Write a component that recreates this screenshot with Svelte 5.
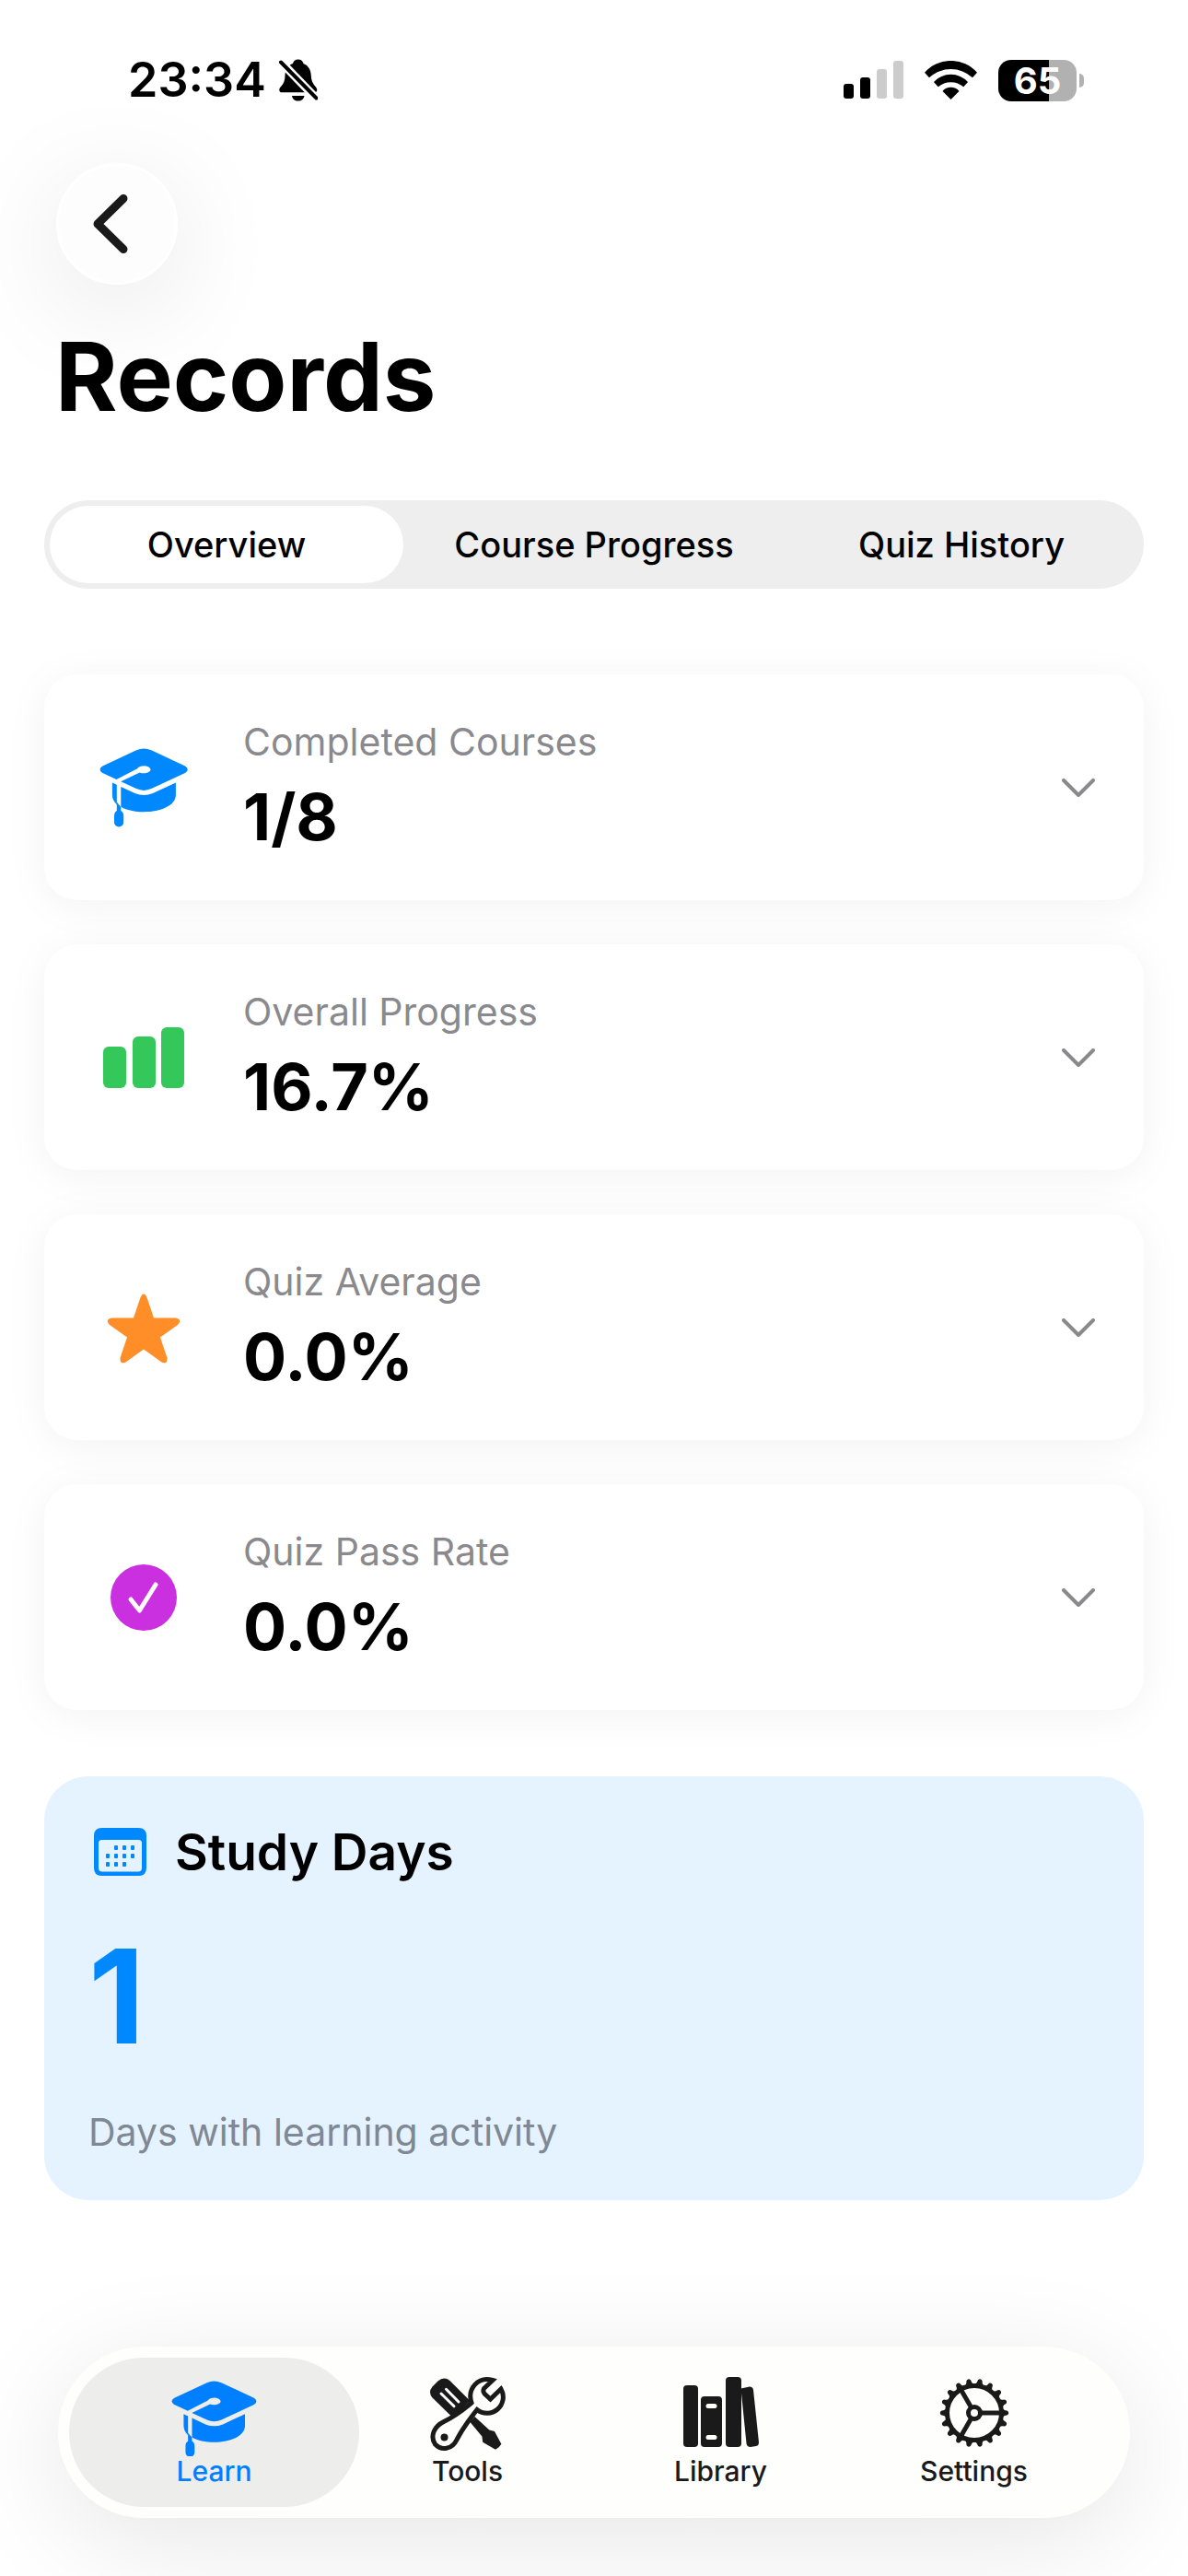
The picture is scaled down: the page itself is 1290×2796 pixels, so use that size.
<!--
  Records screen: study statistics overview with bottom tab bar
-->
<script lang="ts">
	type IconName = 'cap' | 'capSmall' | 'bars' | 'star' | 'check' | 'tools' | 'library' | 'gear';

	interface Stat {
		label: string;
		value: string;
		icon: IconName;
		tone: string;
	}

	const segments = ['Overview', 'Course Progress', 'Quiz History'];

	const stats: Stat[] = [
		{ label: 'Completed Courses', value: '1/8', icon: 'cap', tone: 'blue' },
		{ label: 'Overall Progress', value: '16.7%', icon: 'bars', tone: 'green' },
		{ label: 'Quiz Average', value: '0.0%', icon: 'star', tone: 'orange' },
		{ label: 'Quiz Pass Rate', value: '0.0%', icon: 'check', tone: 'purple' }
	];

	const tabs: { label: string; icon: IconName }[] = [
		{ label: 'Learn', icon: 'capSmall' },
		{ label: 'Tools', icon: 'tools' },
		{ label: 'Library', icon: 'library' },
		{ label: 'Settings', icon: 'gear' }
	];

	const teeth = Array.from({ length: 18 }, (_, i) => i * 20);
	const calendarDots = [
		[24, 21], [33, 21], [42, 21],
		[15, 30], [24, 30], [33, 30], [42, 30],
		[15, 39], [24, 39], [33, 39]
	];

	let segment = $state('Overview');
	let tab = $state('Learn');
</script>

{#snippet icon(name: IconName)}
	<svg class="icon" viewBox="0 0 96 88" fill="currentColor" aria-hidden="true">
		{#if name === 'cap' || name === 'capSmall'}
			<g transform={name === 'cap' ? 'translate(0.5 1.5)' : 'translate(1.500 6.5) scale(0.965)'}>
				<path d="M39.6 1.7Q47.7-1.8 55.8 1.7L92.5 19Q98 22.7 92.5 26.5L55.8 43.6Q47.7 47.2 39.6 43.6L22.7 35.7L43.2 25.9A7.3 4 0 1 0 40.6 21.8L18 33.5L2.9 26.5Q-2.8 22.7 2.9 19Z" />
				<path d="M13.4 37L18.3 39.3V61C15 57.5 13.4 54 13.4 50Z" />
				<path d="M22.8 41.4L38 48.6Q47.7 52.5 57.5 48.6L82.4 37V50C82.4 62 66 68.7 47.7 68.7C38 68.7 29 66.8 22.8 63.2Z" />
				<path d="M18.3 58L22.8 63.5V67.5Q25.7 69 25.7 73V80A5.1 5.1 0 0 1 15.5 80V73Q15.5 69 18.3 67.5Z" />
			</g>
		{:else if name === 'bars'}
			<rect x="4" y="32" width="25" height="45" rx="6" />
			<rect x="36" y="21" width="25" height="56" rx="6" />
			<rect x="67" y="11" width="25" height="66" rx="6" />
		{:else if name === 'star'}
			<path d="M44.4 11.5Q48 3.5 51.6 11.5L59 33.5H82.5Q90.500 35 85 41L66 54.5L73.5 77Q74 84.5 67.5 81.5L48 67.5L28.5 81.5Q22 84.5 22.5 77L30 54.5L11 41Q5.5 35 13.5 33.5H37Z" />
		{:else if name === 'check'}
			<circle cx="48" cy="44" r="36" />
			<path class="mark" d="M34 46L43.5 58L61 30" />
		{:else if name === 'tools'}
			<g transform="translate(7 2)">
				<path d="M2.5 22.5Q-2.5 16.5 2.5 10.5L8.5 4.5Q15-1 21.5 4L43.5 26Q34 36 23.5 43Z" />
				<path d="M43.3 48.8L48.5 43L64.3 57.5L70 59L77.4 72.7Q75 77 71 78.7L57.2 70.7L56.4 64.5Z" />
				<path class="slit" d="M12 18L26 31.7M17.5 13.3L31 27" />
				<path class="outline" d="M68 3.5L58.5 12.5Q57 15.500 59 18L65.5 24L77 13A17.500 17.500 0 0 1 51 35.500C43 46 37 53 29 68C24 79 12 80 5.5 73C-1 63 6 53 14 49C28 42 37 35 45 28C40 13 52-1 68 3.5Z" />
				<circle cx="15.5" cy="65.5" r="4" />
			</g>
		{:else if name === 'library'}
			<rect x="7" y="11" width="16" height="67" rx="4" />
			<path fill-rule="evenodd" d="M30 23Q26 23 26 27V74Q26 78 30 78H45Q49 78 49 74V27Q49 23 45 23ZM34 31H41A2 2 0 0 1 41 36H34A2 2 0 0 1 34 31ZM34 65H41A2 2 0 0 1 41 70H34A2 2 0 0 1 34 65Z" />
			<rect x="53" y="2" width="17" height="76" rx="4" />
			<path d="M69.5 14.5L79 12.5Q82.5 12.5 83 16L89 73Q89 76.5 86 77L80 78Q76 78 75.5 74Z" />
		{:else if name === 'gear'}
			<g transform="translate(48 41)">
				<circle class="ring" r="29.5" />
				<circle class="hub" r="6.5" />
				{#each [0, 120, 240] as angle}
					<path class="spoke" d="M8 0H28" transform="rotate({angle})" />
				{/each}
				{#each teeth as angle}
					<path d="M30-5Q33-2.5 36-2.3Q38.5 0 36 2.3Q33 2.5 30 5Z" transform="rotate({angle})" />
				{/each}
			</g>
		{/if}
	</svg>
{/snippet}

<div class="screen">
	<header class="status-bar">
		<div class="status-group clock">
			<time>23:34</time>
			<svg width="42" height="46" viewBox="0 0 42 46" aria-label="Silent mode">
				<path d="M20.7 .5C24 .5 26 2.5 26.5 5C32 7 34.5 12 34.8 18C35 24 37 27 40 30.5C42.5 34 41 36.3 38 36.3H3.5C-.5 36.3-.5 32.5 2 30C5 27 6.5 23 6.5 18C6.8 11 9.5 7 15 5C15.5 2.5 17.5 .5 20.7 .5Z" />
				<path d="M14 40H27.5C27 43.5 24.5 45.5 20.7 45.5S14.5 43.5 14 40Z" />
				<path class="slash-gap" d="M0 1L42 44.5" />
				<path class="slash" d="M2 3.5L40.5 42.5" />
			</svg>
		</div>
		<div class="status-group">
			<svg width="65" height="42" viewBox="0 0 65 42" aria-label="Signal">
				<rect x="0" y="25" width="11" height="16" rx="3" />
				<rect x="18" y="18" width="11" height="23" rx="3" />
				<rect class="faint" x="36" y="9" width="11" height="32" rx="3" />
				<rect class="faint" x="54" y="0" width="11" height="41" rx="3" />
			</svg>
			<svg width="57" height="42" viewBox="0 0 57 42" aria-label="Wi-Fi">
				<path d="M0 12.8A38 38 0 0 1 57 12.8L52 18.3A34.3 34.3 0 0 0 5 18.3Z" />
				<path d="M10 23A25 25 0 0 1 47 23L42.3 28.3A21 21 0 0 0 14.7 28.3Z" />
				<path d="M19.5 33A11.5 11.5 0 0 1 37.5 33L28.5 42Z" />
			</svg>
			<div class="battery">
				<span class="battery-body">65</span>
				<span class="battery-tip"></span>
			</div>
		</div>
	</header>

	<main>
		<button class="back" aria-label="Back">
			<svg width="38" height="64" viewBox="0 0 38 64" aria-hidden="true">
				<path d="M33 4.5L5 32L33 59.5" />
			</svg>
		</button>

		<h1>Records</h1>

		<div class="segmented" role="tablist">
			{#each segments as name}
				<button
					role="tab"
					class:selected={segment === name}
					aria-selected={segment === name}
					onclick={() => (segment = name)}
				>{name}</button>
			{/each}
		</div>

		<div class="stats">
			{#each stats as stat}
				<button class="card">
					<span class="card-icon {stat.tone}">{@render icon(stat.icon)}</span>
					<span class="card-text">
						<span class="card-label">{stat.label}</span>
						<span class="card-value">{stat.value}</span>
					</span>
					<svg class="chevron" width="36" height="20" viewBox="0 0 36 20" aria-hidden="true">
						<path d="M2 2L18 18L34 2" />
					</svg>
				</button>
			{/each}
		</div>

		<section class="study">
			<h2>
				<svg width="57" height="52" viewBox="0 0 57 52" aria-hidden="true">
					<path fill-rule="evenodd" d="M8.5 0H48.5Q57 0 57 8.5V43.5Q57 52 48.5 52H8.5Q0 52 0 43.5V8.5Q0 0 8.5 0ZM8.5 13Q5 13 5 16.5V43.5Q5 47.5 9 47.5H48Q52 47.5 52 43.5V16.5Q52 13 48.5 13Z" />
					{#each calendarDots as [x, y]}
						<rect x={x - 2} y={y - 2} width="4" height="5" rx="1" />
					{/each}
				</svg>
				Study Days
			</h2>
			<p class="study-count">1</p>
			<p class="study-note">Days with learning activity</p>
		</section>
	</main>

	<nav class="tab-bar">
		{#each tabs as item}
			<button
				class="tab"
				class:active={tab === item.label}
				aria-current={tab === item.label ? 'page' : undefined}
				onclick={() => (tab = item.label)}
			>
				{@render icon(item.icon)}
				<span>{item.label}</span>
			</button>
		{/each}
	</nav>
</div>

<style>
	:global(body) {
		background: #fff;
	}

	.screen {
		box-sizing: border-box;
		min-height: 100vh;
		display: flex;
		flex-direction: column;
		overflow: hidden;
		color: #000;
		font-family: Inter, "Liberation Sans", sans-serif;
	}

	button {
		margin: 0;
		padding: 0;
		border: 0;
		background: none;
		color: inherit;
		font: inherit;
		cursor: pointer;
	}

	svg {
		display: block;
		flex: none;
	}

	/* Status bar */
	.status-bar {
		display: flex;
		justify-content: space-between;
		padding: 55px 113px 58px 139px;
	}

	.status-group {
		display: flex;
		align-items: center;
		gap: 23px;
		height: 64px;
	}

	.clock {
		gap: 14px;
		font-size: 52px;
		font-weight: 600;
		line-height: 64px;
	}

	.slash-gap {
		stroke: #fff;
		stroke-width: 9;
	}

	.slash {
		stroke: #000;
		stroke-width: 4;
		stroke-linecap: round;
	}

	.faint {
		fill: #ccc;
	}

	.battery {
		display: flex;
		align-items: center;
		gap: 3px;
	}

	.battery-body {
		width: 85px;
		border-radius: 14px;
		background: linear-gradient(to right, #000 65%, #b1b1b1 65%);
		color: #fff;
		font-size: 40px;
		font-weight: 700;
		line-height: 45px;
		text-align: center;
	}

	.battery-tip {
		width: 5px;
		height: 15px;
		border-radius: 0 8px 8px 0;
		background: #b1b1b1;
	}

	main {
		padding: 0 48px;
	}

	.back {
		display: flex;
		align-items: center;
		width: 132px;
		height: 132px;
		margin-left: 13px;
		padding-left: 37px;
		box-sizing: border-box;
		border: 3px solid #fff;
		border-radius: 50%;
		background: #fdfdfd;
		box-shadow: 0 24px 120px rgba(0, 0, 0, 0.1);
	}

	.back path {
		fill: none;
		stroke: #1a1a1a;
		stroke-width: 9;
		stroke-linecap: round;
		stroke-linejoin: round;
	}

	h1 {
		margin: 40px 12px 74px;
		font-size: 103px;
		font-weight: 700;
		line-height: 120px;
	}

	.segmented {
		display: grid;
		grid-template-columns: repeat(3, 1fr);
		gap: 15px;
		padding: 6px;
		border-radius: 48px;
		background: #eee;
	}

	.segmented button {
		height: 84px;
		border-radius: 42px;
		font-size: 38px;
		font-weight: 500;
		white-space: nowrap;
	}

	.segmented .selected {
		background: #fff;
	}

	/* Stat cards */
	.stats {
		display: flex;
		flex-direction: column;
		gap: 48px;
		margin: 93px 0 72px;
	}

	.card {
		display: flex;
		align-items: center;
		gap: 48px;
		padding: 48px;
		border-radius: 36px;
		background: #fff;
		box-shadow: 0 6px 48px rgba(0, 0, 0, 0.05);
		text-align: left;
	}

	.card-icon {
		display: flex;
		justify-content: center;
		width: 120px;
	}

	.icon {
		width: 96px;
		height: 88px;
	}

	.blue {
		color: #0088ff;
	}

	.green {
		color: #34c759;
	}

	.orange {
		color: #ff8d28;
	}

	.purple {
		color: #cb30e0;
	}

	.card-text {
		display: flex;
		flex: 1;
		flex-direction: column;
		gap: 15px;
	}

	.card-label {
		color: #8a8a8e;
		font-size: 41px;
		line-height: 50px;
	}

	.card-value {
		font-size: 70px;
		font-weight: 700;
		line-height: 84px;
	}

	.chevron {
		margin-right: 5px;
	}

	.chevron path {
		fill: none;
		stroke: #8a8a8e;
		stroke-width: 4;
		stroke-linecap: round;
		stroke-linejoin: round;
	}

	.mark,
	.slit {
		fill: none;
		stroke: #fff;
		stroke-linecap: round;
		stroke-linejoin: round;
	}

	.mark {
		stroke-width: 5;
	}

	.slit {
		stroke-width: 3;
	}

	.outline,
	.ring,
	.hub,
	.spoke {
		fill: none;
		stroke: currentColor;
		stroke-width: 5;
	}

	/* Study days */
	.study {
		display: flex;
		flex-direction: column;
		gap: 36px;
		padding: 48px;
		border-radius: 48px;
		background: #e5f2ff;
	}

	.study h2 {
		display: flex;
		align-items: center;
		gap: 31px;
		margin: 0;
		padding-left: 6px;
		font-size: 55px;
		font-weight: 600;
		line-height: 68px;
	}

	.study h2 svg {
		fill: #0088ff;
	}

	.study p {
		margin: 0;
	}

	.study-count {
		color: #0088ff;
		font-size: 142px;
		font-weight: 700;
		line-height: 172px;
	}

	.study-note {
		color: #7f8893;
		font-size: 41px;
		line-height: 52px;
	}

	/* Tab bar */
	.tab-bar {
		display: flex;
		margin: auto 63px 63px;
		padding: 12px 32px;
		border-radius: 93px;
		background: #fefefd;
		box-shadow: 0 24px 120px rgba(0, 0, 0, 0.1);
	}

	.tab {
		display: flex;
		flex: 1;
		flex-direction: column;
		align-items: center;
		margin: 0 -20px;
		padding: 19px 0 23px;
		border-radius: 81px;
		color: #1a1a1a;
		font-size: 30px;
		font-weight: 500;
		line-height: 32px;
	}

	.tab.active {
		background: #ededeb;
		color: #007fff;
	}
</style>
